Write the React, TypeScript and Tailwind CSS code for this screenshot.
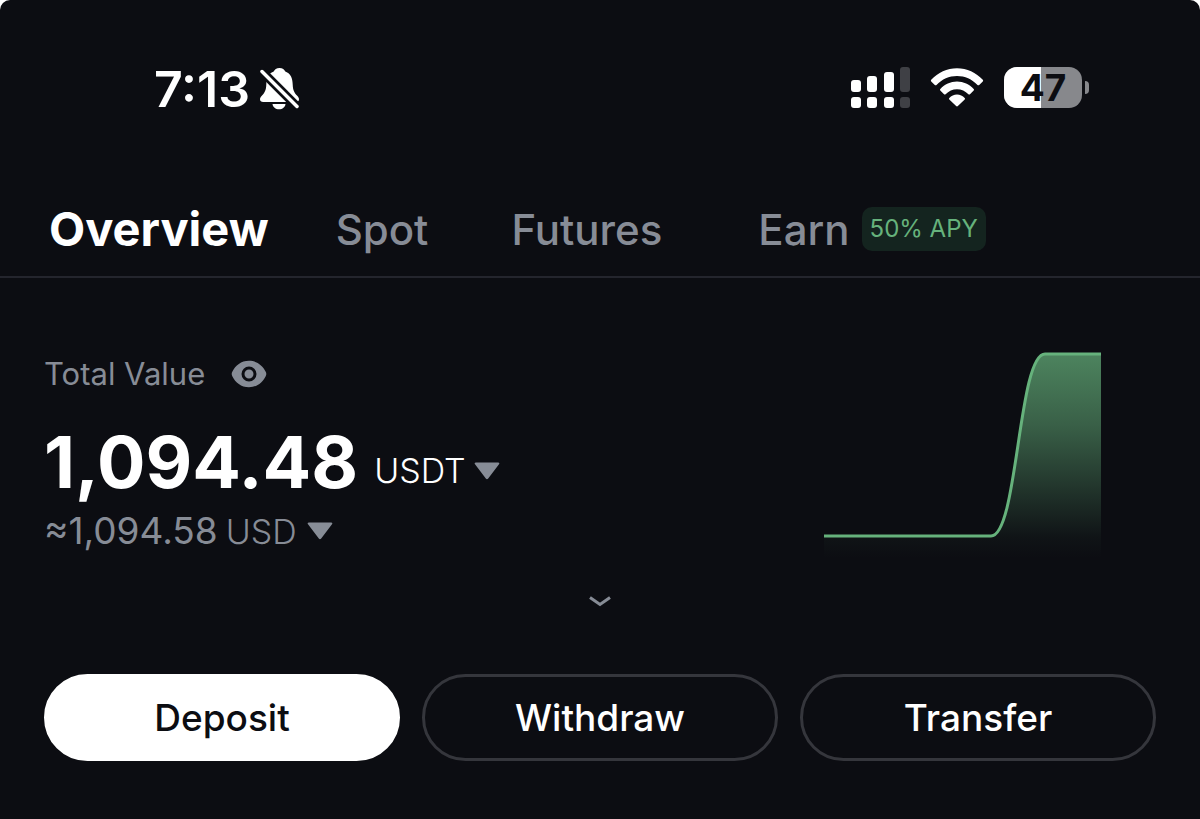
import { useState } from "react";

interface Tab {
  id: string;
  label: string;
  spacing: string;
  badge?: string;
}

const TABS: Tab[] = [
  { id: "overview", label: "Overview", spacing: "" },
  { id: "spot", label: "Spot", spacing: "ml-[67px]" },
  { id: "futures", label: "Futures", spacing: "ml-[83px]" },
  { id: "earn", label: "Earn", spacing: "ml-24", badge: "50% APY" },
];

const ACTIONS = [
  { label: "Deposit", style: "bg-white text-[#0c0d12] border-white" },
  { label: "Withdraw", style: "text-white border-[#35363c]" },
  { label: "Transfer", style: "text-white border-[#35363c]" },
];

function BellOffIcon() {
  return (
    <svg width="40" height="42" viewBox="0 0 40 42" fill="none" aria-hidden="true">
      <path
        d="M19.500 0c-3 0-5 1.600-5.800 3.600C8 5.800 6.500 10.500 6.300 16.500 6.100 22.500 4.500 25 1.800 27.800.4 29.300 0 30.200 0 31.300 0 33 1.200 34 3.200 34h32.600c2 0 3.200-1 3.200-2.700 0-1.100-.4-2-1.800-3.500-2.700-2.800-4.300-5.300-4.500-11.300-.2-6-1.700-10.700-7.400-12.900C24.500 1.600 22.500 0 19.500 0Z"
        fill="#fff"
      />
      <path d="M12.500 36h13c-.4 3.200-3 5.300-6.500 5.300s-6.100-2.100-6.500-5.300Z" fill="#fff" />
      <path d="M-1 .5 39 40.500" stroke="#0c0d12" strokeWidth="9" />
      <path d="M2 3.500 37 38.500" stroke="#fff" strokeWidth="3.500" strokeLinecap="round" />
    </svg>
  );
}

function SignalIcon() {
  return (
    <svg width="59" height="41" viewBox="0 0 59 41" fill="#fff" aria-hidden="true">
      <rect x="0" y="13" width="10" height="12" rx="3" />
      <rect x="16" y="9" width="10" height="16" rx="3" />
      <rect x="33" y="5" width="10" height="20" rx="3" />
      <rect x="49" y="0" width="10" height="25" rx="3" fill="#3f4045" />
      <rect x="0" y="30" width="10" height="11" rx="3" />
      <rect x="16" y="30" width="10" height="11" rx="3" />
      <rect x="33" y="30" width="10" height="11" rx="3" />
      <rect x="49" y="30" width="10" height="11" rx="3" fill="#3f4045" />
    </svg>
  );
}

function WifiIcon() {
  return (
    <svg width="54" height="40" viewBox="0 0 54 40" fill="#fff" aria-hidden="true">
      <path d="M1.200 12.800C8 5.500 17 1.200 27 1.200s19 4.300 25.800 11.600c.5.500.5 1.100 0 1.600l-3.600 3.500c-.5.500-1.200.5-1.700 0C42 12.300 35 9 27 9S12 12.300 6.500 17.900c-.5.500-1.200.5-1.700 0l-3.600-3.500c-.5-.5-.5-1.100 0-1.600Z" />
      <path d="M10.300 22c4.400-4.700 10.200-7.500 16.700-7.500S39.300 17.300 43.700 22c.5.500.5 1.100 0 1.600l-3.700 3.600c-.5.500-1.100.5-1.600 0-3-3.100-7-5-11.400-5s-8.400 1.900-11.400 5c-.5.500-1.100.5-1.600 0l-3.700-3.600c-.5-.5-.5-1.100 0-1.600Z" />
      <path d="M19.300 31c2-2.100 4.700-3.400 7.700-3.400s5.700 1.300 7.700 3.400c.5.500.5 1.100 0 1.600l-6.800 6.500c-.5.500-1.300.5-1.800 0l-6.800-6.500c-.5-.5-.5-1.100 0-1.600Z" />
    </svg>
  );
}

function Battery({ level }: { level: number }) {
  return (
    <div className="flex items-center gap-[3px]">
      <div className="relative h-[41px] w-[78px] overflow-hidden rounded-[13px] bg-[#87888c]">
        <div className="h-full bg-white" style={{ width: `${level}%` }} />
        <span className="absolute inset-0 flex items-center justify-center text-[37px] leading-none font-bold text-[#0c0d12]">
          {level}
        </span>
      </div>
      <div className="h-[13px] w-1 rounded-r-full bg-[#87888c]" />
    </div>
  );
}

function EyeIcon() {
  return (
    <svg width="36" height="28" viewBox="0 0 36 28" aria-hidden="true">
      <path
        d="M18 .8C26 .8 31.500 5.500 34.700 11.800c.8 1.500.8 2.900 0 4.400C31.500 22.500 26 27.200 18 27.200S4.500 22.500 1.300 16.200c-.8-1.500-.8-2.900 0-4.400C4.500 5.500 10 .8 18 .8Z"
        fill="#878c96"
      />
      <circle cx="18" cy="14" r="6" fill="#878c96" stroke="#0c0d12" strokeWidth="3" />
    </svg>
  );
}

function CaretIcon() {
  return (
    <svg width="26" height="18" viewBox="0 0 26 18" aria-hidden="true">
      <path
        d="M1.800.5h22.400c1.100 0 1.500 1 .8 1.800L14.200 16.600c-.7.800-1.700.8-2.400 0L1 2.300C.3 1.500.7.500 1.800.5Z"
        fill="#878c96"
      />
    </svg>
  );
}

function ValueChart() {
  return (
    <svg width="277" height="210" viewBox="0 0 277 210" fill="none" role="img" aria-label="Total value trend">
      <defs>
        <linearGradient id="valueFill" x1="0" y1="0" x2="0" y2="1">
          <stop offset="0" stopColor="#66b27c" stopOpacity="0.72" />
          <stop offset="0.35" stopColor="#66b27c" stopOpacity="0.5" />
          <stop offset="0.9" stopColor="#66b27c" stopOpacity="0.04" />
          <stop offset="1" stopColor="#66b27c" stopOpacity="0" />
        </linearGradient>
      </defs>
      <path d="M0 186H167C194 186 194 4 221 4H277V208H0Z" fill="url(#valueFill)" />
      <path d="M0 186H167C194 186 194 4 221 4H277" stroke="#66b27c" strokeWidth="3" />
    </svg>
  );
}

export default function App() {
  const [activeTab, setActiveTab] = useState("overview");

  return (
    <div className="min-h-screen bg-white font-['Inter',sans-serif]">
      <div className="min-h-screen rounded-t-[10px] bg-[#0c0d12]">
        <header className="flex items-center justify-between pt-[60px] pr-[111px] pl-[154px] text-white">
          <div className="flex items-center gap-2.5 pt-1">
            <span className="text-[50px] leading-none font-semibold">7:13</span>
            <BellOffIcon />
          </div>
          <div className="flex items-center gap-5">
            <SignalIcon />
            <WifiIcon />
            <Battery level={47} />
          </div>
        </header>

        <nav className="mt-[85px] flex h-[79px] items-start border-b-2 border-[#24252d] pl-[49px]">
          {TABS.map((tab) => (
            <button
              key={tab.id}
              type="button"
              onClick={() => setActiveTab(tab.id)}
              className={`flex h-[60px] items-center gap-3 ${tab.spacing} ${
                activeTab === tab.id
                  ? "text-[47px] font-bold text-white"
                  : "text-[42px] font-medium text-[#878c96]"
              }`}
            >
              {tab.label}
              {tab.badge && (
                <span className="flex h-11 items-center rounded-[10px] bg-[#14241f] px-2 text-2xl font-normal text-[#66b27c]">
                  {tab.badge}
                </span>
              )}
            </button>
          ))}
        </nav>

        <main className="px-11">
          <section className="flex items-start justify-between pt-[72px]">
            <div className="text-[#878c96]">
              <div className="flex h-12 items-center gap-[26px] text-[31px]">
                <span>Total Value</span>
                <button type="button" aria-label="Hide balance">
                  <EyeIcon />
                </button>
              </div>
              <div className="mt-7 flex items-end gap-4">
                <span className="text-7xl leading-none font-bold text-white">1,094.48</span>
                <button
                  type="button"
                  className="flex items-center gap-2 pb-[7px] text-[34px] leading-10 font-light text-white"
                >
                  USDT
                  <CaretIcon />
                </button>
              </div>
              <div className="mt-[9px] flex h-12 items-center gap-2 text-[37px]">
                <span>≈1,094.58</span>
                <button type="button" className="flex items-center gap-2.5 text-[34px] font-light">
                  USD
                  <CaretIcon />
                </button>
              </div>
            </div>
            <div className="mr-[55px]">
              <ValueChart />
            </div>
          </section>

          <button type="button" aria-label="Show more" className="mx-auto mt-[35px] block">
            <svg width="24" height="14" viewBox="0 0 24 14" fill="none" aria-hidden="true">
              <path d="M2 2.500 12 9.500 22 2.500" stroke="#878c96" strokeWidth="3" />
            </svg>
          </button>

          <div className="mt-[65px] grid grid-cols-3 gap-[22px]">
            {ACTIONS.map((action) => (
              <button
                key={action.label}
                type="button"
                className={`h-[87px] rounded-full border-[3px] text-[37px] font-medium ${action.style}`}
              >
                {action.label}
              </button>
            ))}
          </div>
        </main>
      </div>
    </div>
  );
}
